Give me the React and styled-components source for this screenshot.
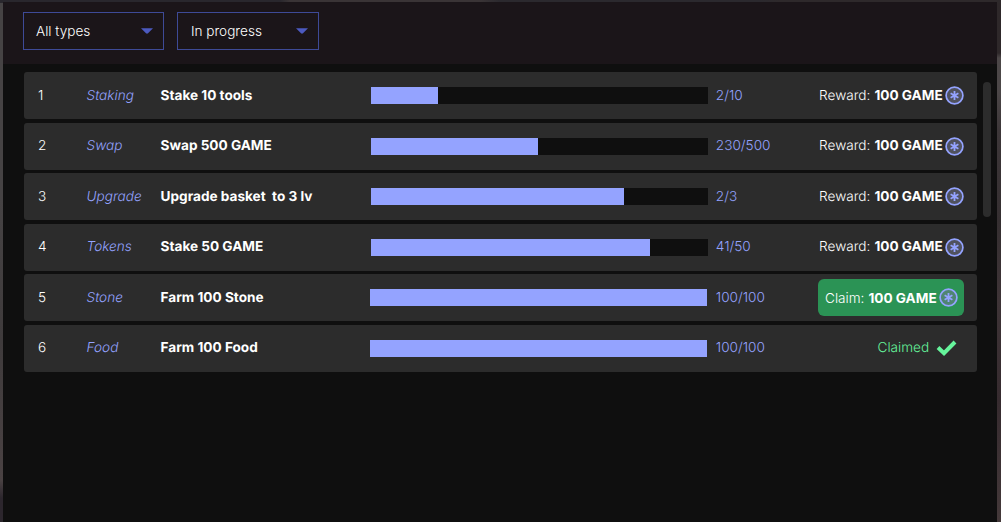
import React from "react";
import styled, { createGlobalStyle } from "styled-components";

const GlobalStyle = createGlobalStyle`
  * { box-sizing: border-box; }
  body {
    margin: 0;
    overflow: hidden;
    font-family: Inter, "Liberation Sans", sans-serif;
    font-size: 13.6px;
    font-weight: 350;
    text-rendering: geometricPrecision;
    color: #fff;
  }
`;

const Page = styled.main`
  height: 522px;
  padding: 1.5px 4px 0 2.6px;
  background:
    linear-gradient(90deg, #29272d 0 280px, #3a3436 290px 480px, #2b292e 500px 760px, #2e292b 780px) 0 0 / 100% 3px no-repeat,
    linear-gradient(180deg, #2e282a 0 53px, #4c4748 58px 90px, #3d3739 130px, #352f31 220px, #3e3437 300px, #362b2f 400px, #44393a 522px) 100% 0 / 6px 100% no-repeat,
    linear-gradient(180deg, #464344 0 200px, #3f3b3c 340px, #4a4243 480px, #2c262d 498px 522px);
`;

const Panel = styled.section`
  display: flex;
  flex-direction: column;
  height: 520.5px;
  background: #0f0f0f;
`;

const Toolbar = styled.header`
  display: flex;
  gap: 13.4px;
  height: 62.5px;
  padding: 10.5px 0 0 20px;
  background: #1b1519;
`;

const Select = styled.button`
  display: flex;
  align-items: center;
  justify-content: space-between;
  width: 141.5px;
  height: 38px;
  padding: 0 10px 0 12.4px;
  border: 1.5px solid #3e4a97;
  background: transparent;
  color: #fff;
  font: inherit;
`;

const Caret = styled.svg`
  width: 12px;
  height: 6px;
  fill: #4c5ac0;
`;

const Content = styled.div`
  display: flex;
  gap: 6px;
  padding: 8.2px 0 0 21.7px;
`;

const List = styled.ul`
  display: flex;
  flex-direction: column;
  gap: 3.4px;
  width: 952.7px;
  margin: 0;
  padding: 0;
  list-style: none;
`;

const Row = styled.li`
  display: grid;
  grid-template-columns: 48.7px 74px 210.3px 345px 1fr;
  align-items: center;
  height: 47.1px;
  padding: 0.5px 12.8px 0 13.6px;
  border-radius: 3px;
  background: #2c2c2c;
  white-space: pre;
`;

const Index = styled.span`
  color: #fff;
`;

const Type = styled.span`
  color: #94a3ff;
  font-style: italic;
`;

const Title = styled.strong`
  font-weight: 700;
`;

const Track = styled.div`
  width: 336.7px;
  height: 17px;
  margin: -0.5px 0 0 ${({ $full }) => ($full ? "-0.7px" : "0")};
  background: #0f0f0f;
`;

const Fill = styled.div`
  height: 100%;
  background: #94a3ff;
`;

const Score = styled.div`
  display: flex;
  align-items: center;
  justify-content: space-between;
  color: #94a3ff;
`;

const Reward = styled.div`
  display: flex;
  align-items: center;
  color: #fff;

  strong {
    margin: 0 2.5px 0 4px;
    font-weight: 700;
  }
`;

const Claim = styled.button`
  display: flex;
  align-items: center;
  height: 37px;
  padding: 0 6px 0 6.5px;
  border: 0;
  border-radius: 6px;
  background: #2b9355;
  color: #fff;
  font: inherit;

  strong {
    margin: 0 2.5px 0 4px;
    font-weight: 700;
  }
`;

const Claimed = styled.div`
  display: flex;
  align-items: center;
  gap: 7px;
  padding-right: 7px;
  color: #66f59c;
`;

const Scrollbar = styled.div`
  width: 8px;
  height: 135px;
  margin-top: 10px;
  border-radius: 4px;
  background: #2c2c2c;
`;

const CoinSvg = styled.svg`
  width: 19px;
  height: 19px;
`;

const Coin = () => (
  <CoinSvg viewBox="0 0 19 19">
    <circle cx="9.5" cy="9.5" r="8.4" fill="#73778f" fillOpacity="0.5" stroke="#94a3ff" strokeWidth="1.7" />
    <path d="M9.5 5v9M5.6 7.3l7.8 4.4M13.4 7.3l-7.8 4.4" stroke="#94a3ff" strokeWidth="1.8" />
  </CoinSvg>
);

const Check = () => (
  <svg width="21" height="16" viewBox="0 0 21 16">
    <path d="M2 7.5l6 5.7L19 2" fill="none" stroke="#66f59c" strokeWidth="4" />
  </svg>
);

const Filter = ({ label }) => (
  <Select>
    {label}
    <Caret viewBox="0 0 12 6"><path d="M0 0.3h12L7 5.3Q6 6 5 5.3z" /></Caret>
  </Select>
);

const quests = [
  { type: "Staking", title: "Stake 10 tools", score: "2/10", progress: 20, status: "active" },
  { type: "Swap", title: "Swap 500 GAME", score: "230/500", progress: 49.5, status: "active" },
  { type: "Upgrade", title: "Upgrade basket  to 3 lv", score: "2/3", progress: 75.3, status: "active" },
  { type: "Tokens", title: "Stake 50 GAME", score: "41/50", progress: 83, status: "active" },
  { type: "Stone", title: "Farm 100 Stone", score: "100/100", progress: 100, status: "ready" },
  { type: "Food", title: "Farm 100 Food", score: "100/100", progress: 100, status: "claimed" },
];

const Action = ({ status }) => {
  if (status === "claimed") return <Claimed>Claimed<Check /></Claimed>;
  if (status === "ready") return <Claim>Claim:<strong>100 GAME</strong><Coin /></Claim>;
  return <Reward>Reward:<strong>100 GAME</strong><Coin /></Reward>;
};

export default function App() {
  return (
    <Page>
      <GlobalStyle />
      <Panel>
        <Toolbar>
          <Filter label="All types" />
          <Filter label="In progress" />
        </Toolbar>
        <Content>
          <List>
            {quests.map((q, i) => (
              <Row key={q.type}>
                <Index>{i + 1}</Index>
                <Type>{q.type}</Type>
                <Title>{q.title}</Title>
                <Track $full={q.progress === 100}>
                  <Fill style={{ width: `${q.progress}%` }} />
                </Track>
                <Score>
                  {q.score}
                  <Action status={q.status} />
                </Score>
              </Row>
            ))}
          </List>
          <Scrollbar />
        </Content>
      </Panel>
    </Page>
  );
}
